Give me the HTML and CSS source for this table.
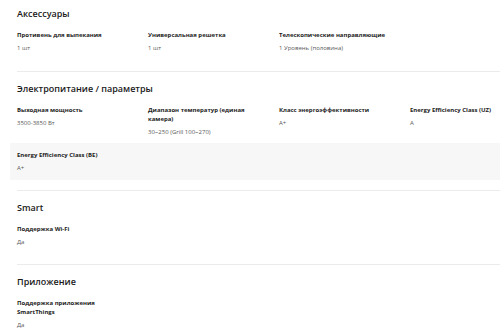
FILE: index.html
```html
<!DOCTYPE html>
<html lang="ru">
<head>
<meta charset="utf-8">
<link rel="stylesheet" href="styles.css">
</head>
<body>
<main class="specs">
  <section class="spec-section first">
    <h2 class="spec-title">Аксессуары</h2>
    <div class="spec-row">
      <div class="spec-item"><div class="spec-label">Противень для выпекания</div><div class="spec-value">1 шт</div></div>
      <div class="spec-item"><div class="spec-label">Универсальная решетка</div><div class="spec-value">1 шт</div></div>
      <div class="spec-item"><div class="spec-label">Телескопические направляющие</div><div class="spec-value">1 Уровень (половина)</div></div>
    </div>
  </section>
  <section class="spec-section power">
    <h2 class="spec-title">Электропитание / параметры</h2>
    <div class="spec-row">
      <div class="spec-item"><div class="spec-label">Выходная мощность</div><div class="spec-value">3500-3850 Вт</div></div>
      <div class="spec-item"><div class="spec-label">Диапазон температур (единая камера)</div><div class="spec-value">30~250 (Grill 100~270)</div></div>
      <div class="spec-item"><div class="spec-label">Класс энергоэффективности</div><div class="spec-value">A+</div></div>
      <div class="spec-item"><div class="spec-label">Energy Efficiency Class (UZ)</div><div class="spec-value">A</div></div>
    </div>
    <div class="spec-row shaded">
      <div class="spec-item"><div class="spec-label">Energy Efficiency Class (BE)</div><div class="spec-value">A+</div></div>
    </div>
  </section>
  <section class="spec-section">
    <h2 class="spec-title">Smart</h2>
    <div class="spec-row">
      <div class="spec-item"><div class="spec-label">Поддержка Wi-Fi</div><div class="spec-value">Да</div></div>
    </div>
  </section>
  <section class="spec-section">
    <h2 class="spec-title">Приложение</h2>
    <div class="spec-row">
      <div class="spec-item"><div class="spec-label">Поддержка приложения SmartThings</div><div class="spec-value">Да</div></div>
    </div>
  </section>
</main>
</body>
</html>
```
FILE: styles.css
```css
html, body {
  margin: 0;
  padding: 0;
  background: #fff;
  overflow: hidden;
}
body {
  font-family: "Open Sans", "Noto Sans", sans-serif;
  color: #1c1c1c;
}
.specs {
  padding-left: 17px;
}
.spec-section {
  border-top: 1px solid #ebebeb;
  padding: 11px 0 11px;
}
.spec-section.first {
  border-top: none;
  padding-top: 8px;
  padding-bottom: 12px;
}
.spec-section.power {
  padding-bottom: 10px;
}
.spec-title {
  margin: 0 0 4px;
  font-size: 9px;
  line-height: 12px;
  font-weight: 600;
  color: #1a1a1a;
}
.spec-row {
  display: grid;
  grid-template-columns: repeat(3, 131px) 1fr;
  padding: 7px 0 6px;
}
.spec-row.shaded {
  background: #f7f7f7;
  margin-left: -7px;
  padding: 8px 0 7px 7px;
}
.spec-item {
  padding-right: 14px;
}
.spec-item:nth-child(4) {
  padding-right: 0;
}
.spec-label {
  font-size: 6px;
  line-height: 9px;
  font-weight: 700;
  color: #1c1c1c;
}
.spec-value {
  margin-top: 4px;
  font-size: 6px;
  line-height: 9px;
  color: #5a5a5a;
}
```
